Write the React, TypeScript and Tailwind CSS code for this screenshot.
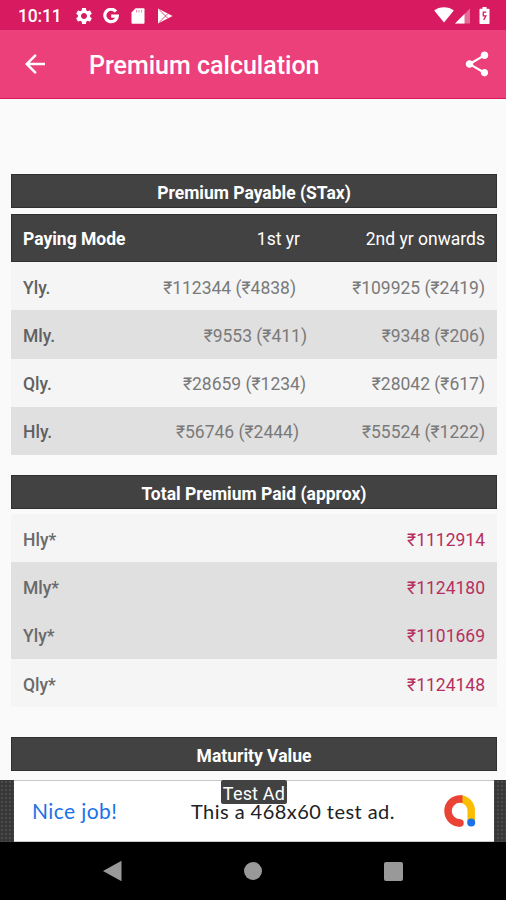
import React from "react";
import { MdArrowBack, MdSettings, MdShare } from "react-icons/md";

interface PremiumRow { mode: string; first: string; later: string; inset: string }

const premiumRows: PremiumRow[] = [
  { mode: "Yly.", first: "₹112344 (₹4838)", later: "₹109925 (₹2419)", inset: "pr-[11px]" },
  { mode: "Mly.", first: "₹9553 (₹411)", later: "₹9348 (₹206)", inset: "pr-0" },
  { mode: "Qly.", first: "₹28659 (₹1234)", later: "₹28042 (₹617)", inset: "pr-px" },
  { mode: "Hly.", first: "₹56746 (₹2444)", later: "₹55524 (₹1222)", inset: "pr-2" },
];

const totals = [
  { mode: "Hly*", amount: "₹1112914", shaded: false },
  { mode: "Mly*", amount: "₹1124180", shaded: true },
  { mode: "Yly*", amount: "₹1101669", shaded: true },
  { mode: "Qly*", amount: "₹1124148", shaded: false },
];

function StatusBar() {
  return (
    <div className="flex h-[30px] items-center bg-[#d81b60] pl-[18px] pr-4 text-white">
      <span className="w-[56px] pt-[3px] text-[17.5px] font-medium leading-none tracking-[-0.2px]">10:11</span>
      <MdSettings className="mt-0.5 size-5" />
      <svg viewBox="0 0 16 16" className="ml-[9px] mt-0.5 size-4" fill="none" stroke="currentColor" strokeWidth="3.2">
        <path d="M12.9 3.6A6.2 6.2 0 1 0 14.2 8.2H8.2" />
      </svg>
      <svg viewBox="0 0 14 16" className="ml-3 mt-0.5 h-4 w-[14px]">
        <path d="M4.5.3H12.5q1 0 1 1v13.4q0 1-1 1H1.5q-1 0-1-1V4.5Z" fill="white" />
        <path d="M5.5 2v2.5M8 2v2.5M10.5 2v2.5" stroke="#d81b60" strokeOpacity=".5" />
      </svg>
      <svg viewBox="0 0 16 16" className="ml-3 mt-0.5 size-4">
        <path d="M1 .6 15.5 8 1 15.4Z" fill="white" />
        <path d="M2 1.5 11 10.5M2 14.5 11 5.5" stroke="#d81b60" strokeWidth=".8" />
      </svg>
      <div className="ml-auto flex items-center">
        <svg viewBox="0 0 20 16" className="mr-px h-4 w-5" fill="currentColor">
          <path d="M10 15.5.2 3.5C5.8-.9 14.2-.9 19.8 3.5Z" />
        </svg>
        <svg viewBox="0 0 16 16" className="mr-px mt-0.5 size-4">
          <path d="M0 15.5 15 .5v15Z" fill="white" fillOpacity=".35" />
          <path d="M0 15.5 9.5 6v9.5Z" fill="white" />
        </svg>
        <svg viewBox="0 0 10 17" className="ml-[7px] h-[17px] w-[11px]">
          <path d="M3 0h4v1.7h2.2q.8 0 .8.8v13.7q0 .8-.8.8H.8q-.8 0-.8-.8V2.5q0-.8.8-.8H3Z" fill="white" />
          <path d="M6.8 5.2H3.8v3.6h2.6L4.2 13" fill="none" stroke="#d81b60" strokeWidth="1.3" />
        </svg>
      </div>
    </div>
  );
}

function SectionTitle({ children }: { children: React.ReactNode }) {
  return (
    <h2 className="flex h-[34px] items-center justify-center border border-[#303030] bg-[#424242] pt-[4px] text-[17.5px] font-bold text-white">
      {children}
    </h2>
  );
}

function AdBanner() {
  return (
    <div className="relative flex h-[62px] justify-center bg-[#383838] bg-[radial-gradient(#4c4c4c_1px,transparent_1px)] bg-[size:4px_4px] pl-[2px]">
      <div className="flex w-[480px] items-center border-y border-[#c9c9c9] bg-white pl-[18px] pr-[18px]">
        <span className="w-[159px] font-[Lato,sans-serif] text-[21px] tracking-[0.4px] text-[#1a73e8]">Nice job!</span>
        <span className="font-[Lato,sans-serif] text-[20px] tracking-[0.45px] text-[#202124]">This a 468x60 test ad.</span>
        <svg viewBox="0 0 32 32" className="ml-auto size-8" fill="none" strokeWidth="7.5">
          <path d="M16 4A11.5 11.5 0 0 1 27.2 16v10.5" stroke="#fbbc04" />
          <path d="M18.5 4H16A12 12 0 1 0 16 28" stroke="#ea4335" />
          <circle cx="16" cy="28" r="3.75" fill="#ea4335" />
          <circle cx="27.2" cy="27.5" r="4" fill="#1a73e8" />
        </svg>
      </div>
      <span className="absolute left-[221px] top-0 flex h-[24px] w-[66px] items-center justify-center rounded-[2px] bg-[#424242] pt-0.5 text-[18px] tracking-[0.2px] text-white">Test Ad</span>
    </div>
  );
}

function NavBar() {
  return (
    <div className="flex h-[58px] items-center justify-between bg-black pl-[102px] pr-[103px] text-[#999]">
      <svg viewBox="0 0 20 22" className="h-[22px] w-5" fill="currentColor"><path d="M1 11 19.5.8v20.4Z" /></svg>
      <span className="size-[18px] rounded-full bg-[#999]" />
      <span className="size-[19px] rounded-[2px] bg-[#999]" />
    </div>
  );
}

export default function App() {
  return (
    <div className="flex h-[900px] w-[506px] flex-col overflow-hidden bg-[#fafafa] font-[Roboto,sans-serif]">
      <StatusBar />
      <header className="flex h-[68.5px] items-center border-b border-[#d81b60] bg-[#ec407a] pl-5 pr-[14px] text-white">
        <MdArrowBack className="size-[30px]" />
        <h1 className="ml-[39px] pt-[4px] text-[25px] font-medium">Premium calculation</h1>
        <MdShare className="ml-auto size-[30px]" />
      </header>

      <main className="flex min-h-0 flex-1 flex-col pl-[11px] pr-[9px] pt-[75.5px] text-[17.5px]">
        <SectionTitle>Premium Payable (STax)</SectionTitle>
        <div className="mt-[6px] flex h-[48px] items-center border border-[#303030] bg-[#424242] px-[11px] pt-[3px] text-white">
          <span className="font-bold">Paying Mode</span>
          <span className="flex-1 pr-[7px] text-right">1st yr</span>
          <span className="w-[178px] text-right">2nd yr onwards</span>
        </div>
        {premiumRows.map((r, i) => (
          <div key={r.mode} className={`flex h-[48.3px] shrink-0 items-center px-3 pt-[3px] text-[#7a7a7a] ${i % 2 ? "bg-[#e0e0e0]" : "bg-[#f5f5f5]"}`}>
            <span className="font-medium text-[#616161]">{r.mode}</span>
            <span className={`flex-1 text-right ${r.inset}`}>{r.first}</span>
            <span className="w-[178px] text-right">{r.later}</span>
          </div>
        ))}

        <div className="mt-[19.5px]"><SectionTitle>Total Premium Paid (approx)</SectionTitle></div>
        <div className="mt-[5.5px]">
          {totals.map(t => (
            <div key={t.mode} className={`flex h-[48.3px] items-center justify-between px-3 pt-[3px] ${t.shaded ? "bg-[#e0e0e0]" : "bg-[#f5f5f5]"}`}>
              <span className="font-medium text-[#6a6a6a]">{t.mode}</span>
              <span className="text-[#b5305f]">{t.amount}</span>
            </div>
          ))}
        </div>

        <div className="mt-[29.5px]"><SectionTitle>Maturity Value</SectionTitle></div>
      </main>

      <AdBanner />
      <NavBar />
    </div>
  );
}
